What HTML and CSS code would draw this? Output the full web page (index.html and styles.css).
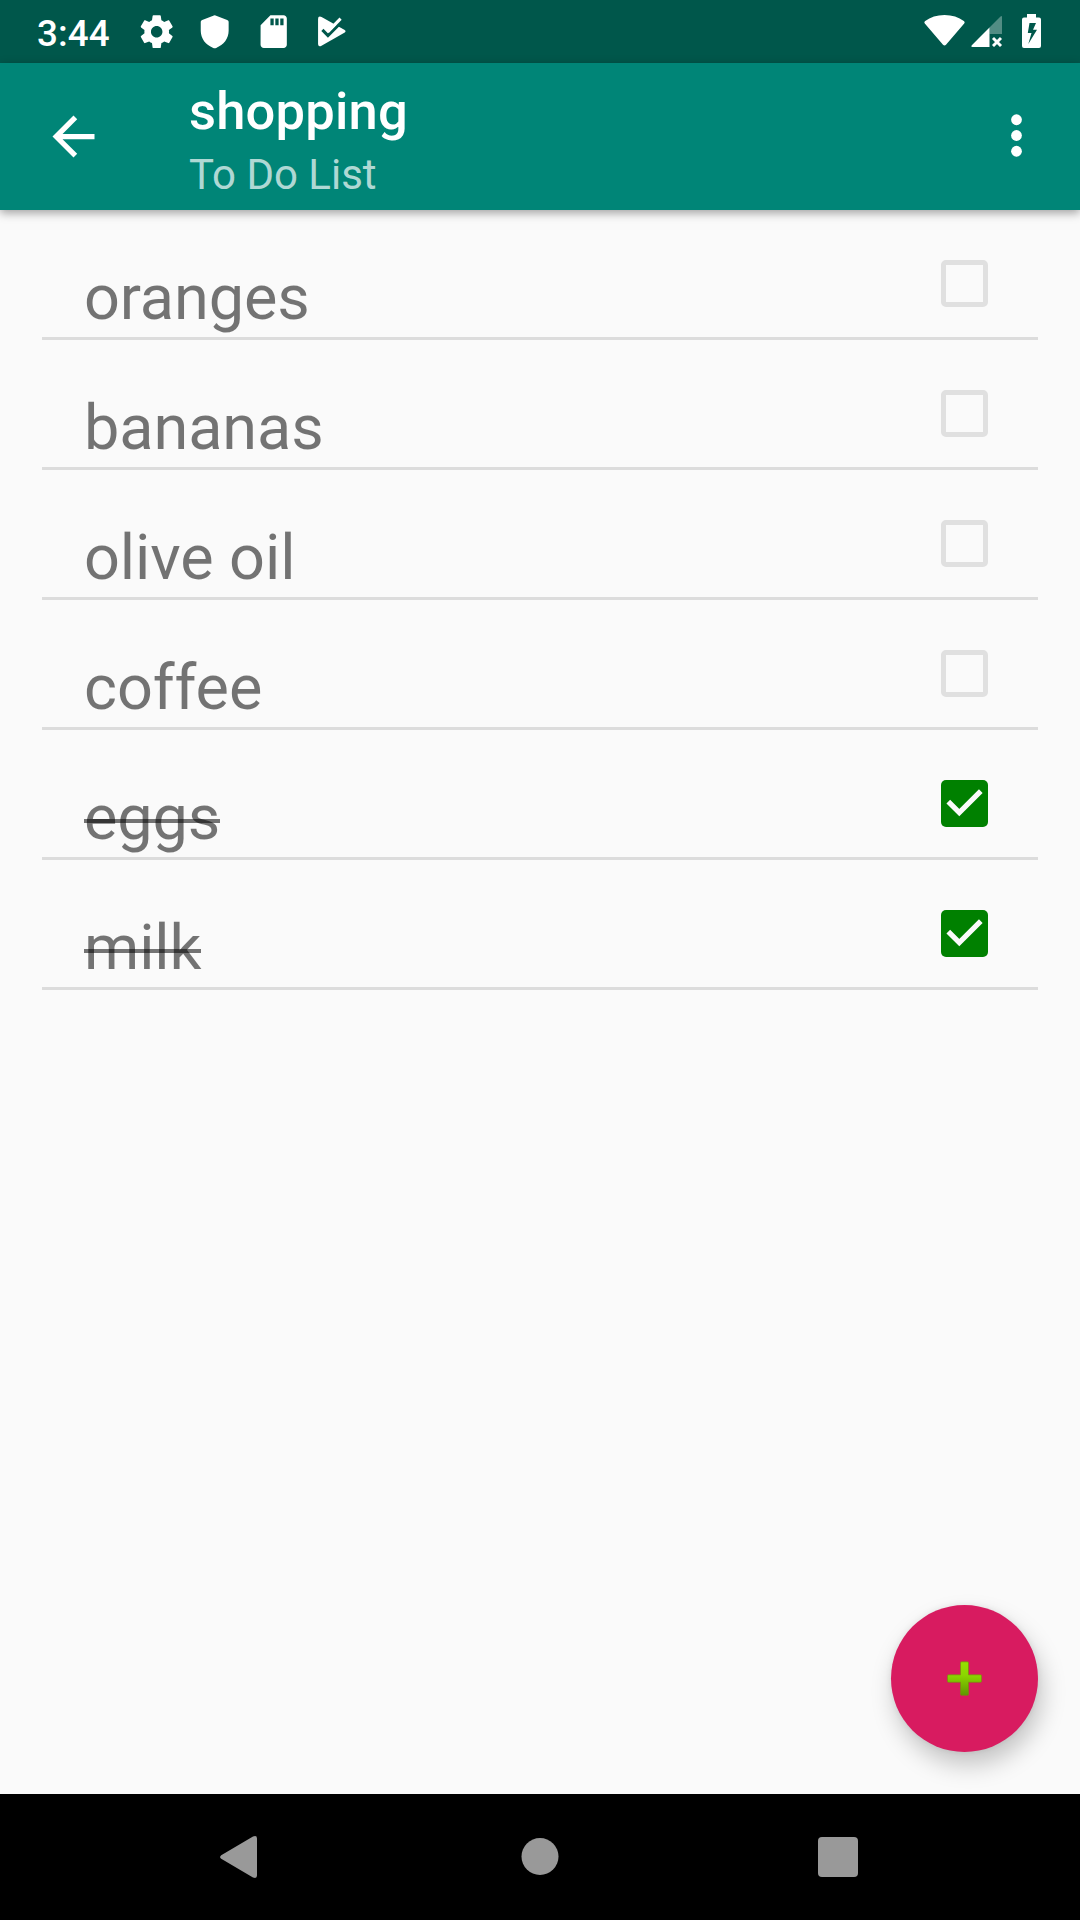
FILE: index.html
```html
<!DOCTYPE html>
<html lang="en">
<head>
<meta charset="utf-8">
<title>shopping</title>
<link rel="stylesheet" href="styles.css">
</head>
<body>
<div class="screen">
  <div class="status-bar">
    <span class="clock">3:44</span>
    <div class="notifications">
      <svg class="note-icon" viewBox="0 0 24 24"><path d="M19.43 12.98c.04-.32.07-.64.07-.98s-.03-.66-.07-.98l2.11-1.65c.19-.15.24-.42.12-.64l-2-3.46c-.12-.22-.39-.3-.61-.22l-2.49 1c-.52-.4-1.08-.73-1.69-.98l-.38-2.65C14.46 2.18 14.25 2 14 2h-4c-.25 0-.46.18-.49.42l-.38 2.65c-.61.25-1.17.59-1.69.98l-2.49-1c-.23-.09-.49 0-.61.22l-2 3.46c-.13.22-.07.49.12.64l2.11 1.65c-.04.32-.07.65-.07.98s.03.66.07.98l-2.11 1.65c-.19.15-.24.42-.12.64l2 3.46c.12.22.39.3.61.22l2.49-1c.52.4 1.08.73 1.69.98l.38 2.65c.03.24.24.42.49.42h4c.25 0 .46-.18.49-.42l.38-2.65c.61-.25 1.17-.59 1.69-.98l2.49 1c.23.09.49 0 .61-.22l2-3.46c.12-.22.07-.49-.12-.64l-2.11-1.65zM12 15.5c-1.93 0-3.5-1.57-3.5-3.5s1.57-3.5 3.5-3.5 3.5 1.57 3.5 3.5-1.57 3.5-3.5 3.5z"/></svg>
      <svg class="note-icon" viewBox="0 0 24 24"><path d="M11.5 2.15q.5-.2 1 0l7.1 2.65q.9.35.9 1.2v5.5c0 4.7-3 8.7-7.6 10.4q-.9.3-1.8 0C6.500 20.2 3.500 16.2 3.500 11.500V6q0-.85.9-1.200z"/></svg>
      <svg class="note-icon" viewBox="0 0 24 24"><path d="M18 2h-8L4.020 8 4 20c0 1.100.9 2 2 2h12c1.100 0 2-.9 2-2V4c0-1.100-.9-2-2-2zm-6 6h-2V4h2v4zm3 0h-2V4h2v4zm3 0h-2V4h2v4z"/></svg>
      <svg class="note-icon play" viewBox="0 0 39 39"><path d="M5 7q0-3.500 3.500-2L31 17.500q2.500 1.500 0 3L8 33.600Q5 35 5 31z"/><path class="groove" d="M9.300 17.700L14.800 23.300 27.800 10.300"/><path class="tick" d="M14.800 19.400L27.300 6.600"/></svg>
    </div>
    <div class="system">
      <svg width="41" height="33" viewBox="0 0 41 33"><path d="M.8 9.600Q-.3 8 1.200 7 9 1 20.500 1t19.300 6q1.500 1 .4 2.600L22 30.800q-1.500 1.600-3 0z"/></svg>
      <svg class="signal" width="32" height="33" viewBox="0 0 32 33"><path opacity=".32" d="M18.500 13.500L29.500 2.500q1.500-1.200 1.500.5v17H18.500z"/><path d="M18.500 13.500V33H1.500Q-.5 33 .8 31.200z"/><path d="M22 24l8 8m0-8l-8 8" fill="none" stroke="#fff" stroke-width="2.900"/></svg>
      <svg class="battery" width="19" height="34" viewBox="0 0 19 34"><path fill-rule="evenodd" d="M5 0h9v3.500h3q2 0 2 2V32q0 2-2 2H2q-2 0-2-2V5.500q0-2 2-2h3zM7.500 9L5.800 19h3.700L6.300 30 15 15.800h-4L14 9z"/></svg>
    </div>
  </div>
  <header class="toolbar">
    <svg class="back" width="63" height="63" viewBox="0 0 24 24"><path d="M20 11H7.830l5.590-5.590L12 4l-8 8 8 8 1.410-1.410L7.830 13H20v-2z"/></svg>
    <div class="titles">
      <h1 class="title">shopping</h1>
      <div class="subtitle">To Do List</div>
    </div>
    <svg class="more" width="63" height="63" viewBox="0 0 24 24"><circle cx="12" cy="6" r="2.050"/><circle cx="12" cy="12" r="2.050"/><circle cx="12" cy="18" r="2.050"/></svg>
  </header>
  <main class="content">
    <ul class="list">
      <li class="item"><span class="label">oranges</span><span class="check"></span></li>
      <li class="item"><span class="label">bananas</span><span class="check"></span></li>
      <li class="item"><span class="label">olive oil</span><span class="check"></span></li>
      <li class="item"><span class="label">coffee</span><span class="check"></span></li>
      <li class="item"><span class="label done">eggs</span><span class="check checked"><svg width="47" height="47" viewBox="0 0 47 47"><path d="M7.300 21.600L18.300 32.600 39.800 11.200"/></svg></span></li>
      <li class="item"><span class="label done">milk</span><span class="check checked"><svg width="47" height="47" viewBox="0 0 47 47"><path d="M7.300 21.600L18.300 32.600 39.800 11.200"/></svg></span></li>
    </ul>
    <div class="fab">
      <svg width="35" height="35" viewBox="0 0 35 35">
        <defs><linearGradient id="lime" x1="0" y1="0" x2="0" y2="1"><stop offset="0" stop-color="#96e000"/><stop offset=".4" stop-color="#8bd600"/><stop offset="1" stop-color="#5f9800"/></linearGradient></defs>
        <path d="M14.500.8h6q1 0 1 1v12h12q1 0 1 1v5.500q0 1-1 1h-12v12q0 1-1 1h-6q-1 0-1-1v-12h-12q-1 0-1-1v-5.500q0-1 1-1h12v-12q0-1 1-1z" fill="url(#lime)" stroke="#7a8a10" stroke-width=".7"/>
      </svg>
    </div>
  </main>
  <nav class="nav-bar">
    <svg width="38" height="44" viewBox="0 0 38 44"><path d="M1.200 20.200L33 1.500q4-1.500 4 2v37q0 3.500-4 2L1.200 23.800q-2.200-1.800 0-3.600z"/></svg>
    <svg class="home" width="38" height="38" viewBox="0 0 38 38"><circle cx="19" cy="18.500" r="18.500"/></svg>
    <svg width="40" height="40" viewBox="0 0 40 40"><rect width="40" height="40" rx="4"/></svg>
  </nav>
</div>
</body>
</html>
```
FILE: styles.css
```css
* { box-sizing: border-box; margin: 0; padding: 0; }
body { width: 1080px; height: 1920px; overflow: hidden; font-family: Roboto, sans-serif; }
svg { display: block; flex: none; }

.screen { display: flex; flex-direction: column; height: 1920px; background: #fafafa; }

.status-bar { display: flex; height: 63px; background: #00574b; }
.status-bar svg { fill: #fff; }
.clock { width: 99px; padding: 12px 0 0 37px; font-size: 36.75px; line-height: 43px; font-weight: 500; letter-spacing: .1px; color: #fff; white-space: nowrap; }
.notifications { display: flex; gap: 19px; padding: 12px 0 0 38px; }
.note-icon { width: 39.4px; height: 39.4px; }
.play { margin-left: .5px; }
.groove { fill: none; stroke: #00574b; stroke-width: 3; }
.tick { fill: none; stroke: #fff; stroke-width: 3; }
.system { display: flex; margin-left: auto; padding: 14px 39px 0 0; }
.signal { margin-left: 6px; }
.battery { margin-left: 19px; }

.toolbar { position: relative; z-index: 1; display: flex; height: 147px; padding: 0 32px 0 42px; background: #008577; box-shadow: 0 3px 9px rgba(0, 0, 0, .36); }
.toolbar svg { fill: #fff; }
.back { margin-top: 42px; }
.more { margin-top: 41px; }
.titles { flex: 1; padding: 17px 0 0 84px; white-space: nowrap; }
.title { font-size: 52.5px; line-height: 62px; font-weight: 500; letter-spacing: .2px; color: #fff; }
.subtitle { margin-top: 8px; font-size: 42px; line-height: 49px; color: rgba(255, 255, 255, .7); }

.content { position: relative; flex: 1; }
.list { list-style: none; padding: 0 42px; }
.item { display: flex; justify-content: space-between; height: 130px; padding: 50px 50px 0 42px; border-bottom: 3px solid #dcdcdc; }
.label { position: relative; height: 74px; padding-top: 1px; font-size: 63px; line-height: 74px; letter-spacing: -.1px; color: rgba(0, 0, 0, .54); white-space: nowrap; }
.done::after { content: ""; position: absolute; left: 0; right: 0; top: 39px; height: 4px; background: rgba(0, 0, 0, .54); }
.check { width: 47px; height: 47px; border: 5px solid #e0e0e0; border-radius: 5px; }
.checked { border: 0; background: #008000; }
.checked path { fill: none; stroke: #fafafa; stroke-width: 5.2; }

.fab { position: absolute; right: 42px; bottom: 42px; display: flex; align-items: center; justify-content: center; width: 147px; height: 147px; border-radius: 50%; background: #d81b60; box-shadow: 4px 13px 24px rgba(0, 0, 0, .22), 0 0 6px rgba(0, 0, 0, .08); }

.nav-bar { display: flex; align-items: center; justify-content: space-between; height: 126px; padding: 0 222px 0 220px; background: #000; }
.nav-bar svg { fill: #999; }
.nav-bar .home { margin-left: 3px; }
```
